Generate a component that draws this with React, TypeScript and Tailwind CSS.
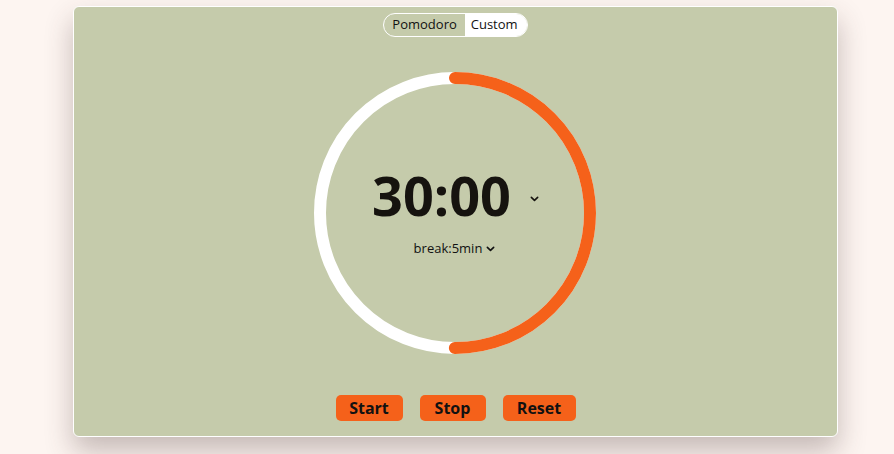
import React from 'react';

const ORANGE = '#f5611a';

const Chevron = ({ className }: { className?: string }) => (
  <svg viewBox="0 0 10 6" className={className} fill="none" stroke="currentColor" strokeWidth="1.8" strokeLinecap="round" strokeLinejoin="round">
    <path d="M1.5 1.2 5 4.6 8.5 1.2" />
  </svg>
);

const Ring = () => {
  const r = 135;
  const c = 2 * Math.PI * r;
  return (
    <svg width="284" height="284" viewBox="0 0 284 284" className="absolute inset-0">
      <circle cx="142" cy="142" r={r} fill="none" stroke="#ffffff" strokeWidth="12" />
      <circle
        cx="142"
        cy="142"
        r={r}
        fill="none"
        stroke={ORANGE}
        strokeWidth="12"
        strokeLinecap="round"
        strokeDasharray={`${c / 2} ${c}`}
        transform="rotate(-90 142 142)"
      />
    </svg>
  );
};

export default function App() {
  return (
    <div className="min-h-[454px] w-full bg-[#fdf5f1] pt-[6px]" style={{ fontFamily: '"Open Sans", "Noto Sans", sans-serif' }}>
      <div className="ml-[73px] w-[765px] h-[431px] rounded-[6px] border border-white bg-[#c5cbab] shadow-[0_14px_28px_rgba(70,45,45,0.3)] flex flex-col items-center">
        <div className="mt-[6px] flex h-[24px] items-stretch rounded-full border border-white overflow-hidden text-[13px] text-[#111]">
          <div className="flex items-center px-[8px]">Pomodoro</div>
          <div className="flex items-center bg-white pl-[6px] pr-[9px]">Custom</div>
        </div>

        <div className="relative mt-[34px] ml-[-2px] h-[284px] w-[284px]">
          <Ring />
          <div className="absolute inset-0 flex flex-col items-center">
            <div className="mt-[97px] ml-[2px] flex items-center">
              <span className="text-[54px] font-bold leading-none text-[#16130f]">30:00</span>
              <Chevron className="ml-[19px] mt-[8px] h-[6px] w-[9px] text-[#16130f]" />
            </div>
            <div className="mt-[17px] flex items-center text-[13px] text-[#111]">
              <span>break:5min</span>
              <Chevron className="ml-[4px] mt-[1px] h-[6px] w-[9px]" />
            </div>
          </div>
        </div>

        <div className="mt-[40px] flex gap-[17px] text-[16px] font-bold text-[#111]">
          <button className="h-[26px] w-[67px] rounded-[5px] bg-[#f5611a]">Start</button>
          <button className="h-[26px] w-[66px] rounded-[5px] bg-[#f5611a]">Stop</button>
          <button className="h-[26px] w-[73px] rounded-[5px] bg-[#f5611a]">Reset</button>
        </div>
      </div>
    </div>
  );
}
